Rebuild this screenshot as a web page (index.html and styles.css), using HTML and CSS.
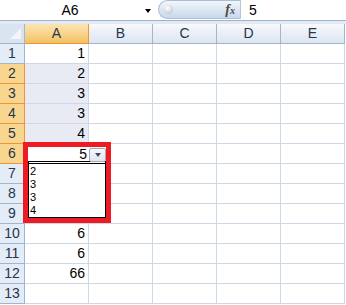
FILE: index.html
```html
<!DOCTYPE html>
<html>
    <head>
        <title>A6</title>
        <link rel="stylesheet" href="styles.css">
    </head>
    <body>
        <div class="formula-bar">
            <div class="name-box">A6</div>
            <span class="name-arrow"></span>
            <div class="fx-pill">
                <span class="knob"></span>
                <span class="fx">f<span class="fx-x">x</span></span>
            </div>
            <div class="formula">5</div>
        </div>
        <div class="band"></div>
        <div class="sheet">
            <div class="row head">
                <div class="corner"><span class="corner-tri"></span></div>
                <div class="ch sel">A</div>
                <div class="ch">B</div>
                <div class="ch">C</div>
                <div class="ch">D</div>
                <div class="ch">E</div>
            </div>
            <div class="row"><div class="rh">1</div><div class="c">1</div><div class="c"></div><div class="c"></div><div class="c"></div><div class="c"></div></div>
            <div class="row"><div class="rh sel">2</div><div class="c hl">2</div><div class="c"></div><div class="c"></div><div class="c"></div><div class="c"></div></div>
            <div class="row"><div class="rh sel">3</div><div class="c hl">3</div><div class="c"></div><div class="c"></div><div class="c"></div><div class="c"></div></div>
            <div class="row"><div class="rh sel">4</div><div class="c hl">3</div><div class="c"></div><div class="c"></div><div class="c"></div><div class="c"></div></div>
            <div class="row"><div class="rh sel">5</div><div class="c hl">4</div><div class="c"></div><div class="c"></div><div class="c"></div><div class="c"></div></div>
            <!-- A6 is shown by the dropdown editor below -->
            <div class="row"><div class="rh sel">6</div><div class="c"></div><div class="c"></div><div class="c"></div><div class="c"></div><div class="c"></div></div>
            <div class="row"><div class="rh">7</div><div class="c"></div><div class="c"></div><div class="c"></div><div class="c"></div><div class="c"></div></div>
            <div class="row"><div class="rh">8</div><div class="c"></div><div class="c"></div><div class="c"></div><div class="c"></div><div class="c"></div></div>
            <div class="row"><div class="rh">9</div><div class="c"></div><div class="c"></div><div class="c"></div><div class="c"></div><div class="c"></div></div>
            <div class="row"><div class="rh">10</div><div class="c">6</div><div class="c"></div><div class="c"></div><div class="c"></div><div class="c"></div></div>
            <div class="row"><div class="rh">11</div><div class="c">6</div><div class="c"></div><div class="c"></div><div class="c"></div><div class="c"></div></div>
            <div class="row"><div class="rh">12</div><div class="c">66</div><div class="c"></div><div class="c"></div><div class="c"></div><div class="c"></div></div>
            <div class="row"><div class="rh">13</div><div class="c"></div><div class="c"></div><div class="c"></div><div class="c"></div><div class="c"></div></div>

            <!-- in-cell dropdown, boxed in red -->
            <div class="validation">
                <div class="v-cell">
                    <div class="v-value">5</div>
                    <div class="v-btn"><span class="v-arrow"></span></div>
                </div>
                <ul class="v-list">
                    <li>2</li>
                    <li>3</li>
                    <li>3</li>
                    <li>4</li>
                </ul>
            </div>
        </div>
    </body>
</html>
```

FILE: styles.css
```css
*{
    margin: 0;
    padding: 0;
    box-sizing: border-box;
}
html{
    background-color: white;
    font-family: "Liberation Sans", Arial, sans-serif;
    font-size: 13px;
    color: black;
}
body{
    width: 346px;
    overflow: hidden;
}
.formula-bar{
    display: flex;
    height: 20px;
    background: white;
}
.name-box{
    width: 140px;
    line-height: 20px;
    text-align: center;
    font-size: 14px;
}
.name-arrow{
    margin: 9px 0 0 5px;
    width: 0;
    height: 0;
    border-left: 3.5px solid transparent;
    border-right: 3.5px solid transparent;
    border-top: 4px solid black;
}
.fx-pill{
    display: flex;
    align-items: center;
    justify-content: space-between;
    width: 83px;
    height: 19px;
    margin-left: 7px;
    padding: 0 5px 0 5px;
    border: 1px solid #a9bdd6;
    border-right-color: #b7c6d8;
    border-radius: 10px 0 0 10px;
    background: linear-gradient(#f2f6fb, #dbe5f2 55%, #c9d8ec);
}
.knob{
    width: 9px;
    height: 9px;
    border-radius: 50%;
    background: radial-gradient(circle at 40% 35%, #ffffff 0, #e6e9ed 35%, #aeb6c0 100%);
}
.fx{
    font-family: "Liberation Serif", serif;
    font-style: italic;
    font-weight: bold;
    font-size: 14px;
    color: #4a4a4a;
    line-height: 17px;
}
.fx-x{
    font-size: 10px;
}
.formula{
    flex: 1;
    padding-left: 8px;
    line-height: 20px;
    font-size: 14px;
}
.band{
    height: 4px;
    border-top: 1px solid #9fb2c9;
    background: #e3eaf3;
}
.sheet{
    position: relative;
}
.row{
    display: flex;
    height: 20px;
}
.corner{
    position: relative;
    width: 25px;
    background: #d9e4f1;
    border-right: 1px solid #9eb6ce;
    border-bottom: 1px solid #9eb6ce;
}
.corner-tri{
    position: absolute;
    right: 3px;
    bottom: 4px;
    width: 0;
    height: 0;
    border-left: 11px solid transparent;
    border-bottom: 11px solid #f3f5f8;
}
.ch{
    width: 64px;
    text-align: center;
    line-height: 19px;
    color: #27354a;
    font-size: 14px;
    background: linear-gradient(#f7f9fc, #e7edf6 60%, #dde5f0);
    border-right: 1px solid #9eb6ce;
    border-bottom: 1px solid #9eb6ce;
}
.ch.sel{
    background: linear-gradient(#fbe3b1, #f8d58f 50%, #f1c15f);
    border-right-color: #f29436;
    border-bottom-color: #f29436;
}
.rh{
    width: 25px;
    text-align: center;
    line-height: 19px;
    color: #27354a;
    font-size: 14px;
    background: #e4ecf7;
    border-right: 1px solid #9eb6ce;
    border-bottom: 1px solid #9eb6ce;
}
.rh.sel{
    background: #f9d690;
    border-right-color: #f29436;
    border-bottom-color: #f29436;
}
.c{
    width: 64px;
    text-align: right;
    padding-right: 3px;
    line-height: 19px;
    font-size: 14px;
    border-right: 1px solid #d0d7e5;
    border-bottom: 1px solid #d0d7e5;
}
.c.hl{
    background: #e9ebf4;
}
.validation{
    position: absolute;
    left: 23px;
    top: 118px;
    width: 88px;
    height: 81px;
    border: 5px solid #ed1c24;
    background: white;
}
.v-cell{
    display: flex;
    height: 14px;
}
.v-value{
    width: 61px;
    text-align: right;
    padding-right: 2px;
    line-height: 15px;
    font-size: 14px;
}
.v-btn{
    display: flex;
    align-items: center;
    justify-content: center;
    width: 17px;
    height: 14px;
    margin-top: 1px;
    border: 1px solid #a3abb8;
    border-radius: 2px;
    background: linear-gradient(#f7f8fb, #e1e6ee);
}
.v-arrow{
    width: 0;
    height: 0;
    border-left: 3.5px solid transparent;
    border-right: 3.5px solid transparent;
    border-top: 4px solid #3d4d66;
}
.v-list{
    list-style: none;
    height: 57px;
    padding-top: 1px;
    border: 1px solid black;
    border-top: 3px double black;
}
.v-list>li{
    height: 13px;
    line-height: 13px;
    padding-left: 1px;
    font-size: 11px;
}
```
